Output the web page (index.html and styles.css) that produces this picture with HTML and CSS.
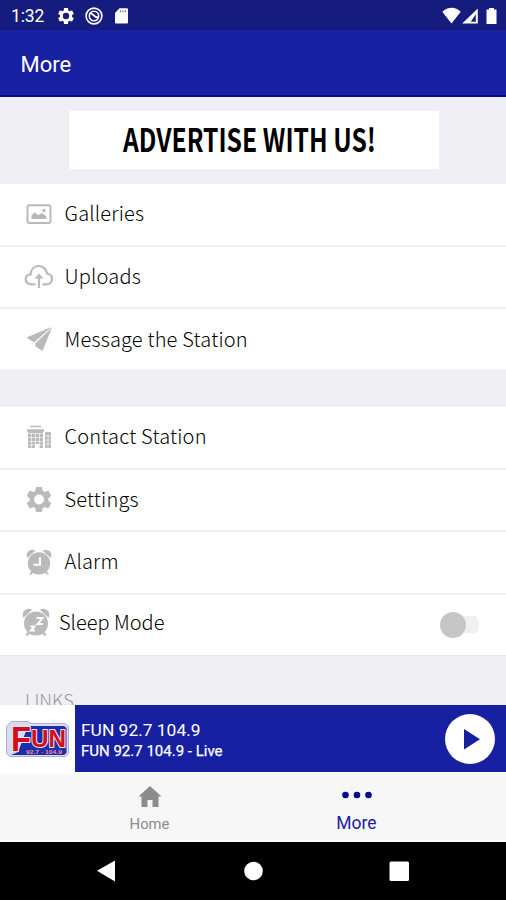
FILE: index.html
```html
<!DOCTYPE html>
<html lang="en">

<head>
    <meta charset="UTF-8">
    <meta name="viewport" content="width=device-width, initial-scale=1.0">
    <title>More</title>
    <link rel="stylesheet" href="styles.css">
</head>

<body>
    <!-- shapes used more than once -->
    <svg class="defs" width="0" height="0">
        <symbol id="gear" viewBox="2 2 20 20">
            <path d="M19.43 12.98c.04-.32.07-.64.07-.98s-.03-.66-.07-.98l2.11-1.65c.19-.15.24-.42.12-.64l-2-3.46c-.12-.22-.39-.3-.61-.22l-2.49 1c-.52-.4-1.08-.73-1.69-.98l-.38-2.65C14.46 2.18 14.25 2 14 2h-4c-.25 0-.46.18-.49.42l-.38 2.65c-.61.25-1.17.59-1.69.98l-2.49-1c-.23-.09-.49 0-.61.22l-2 3.46c-.13.22-.07.49.12.64l2.11 1.65c-.04.32-.07.65-.07.98s.03.66.07.98l-2.11 1.65c-.19.15-.24.42-.12.64l2 3.46c.12.22.39.3.61.22l2.49-1c.52.4 1.08.73 1.69.98l.38 2.65c.03.24.24.42.49.42h4c.25 0 .46-.18.49-.42l.38-2.65c.61-.25 1.17-.59 1.69-.98l2.49 1c.23.09.49 0 .61-.22l2-3.46c.12-.22.07-.49-.12-.64l-2.11-1.65zM12 16a4 4 0 1 1 0-8 4 4 0 0 1 0 8z" fill="currentColor"/>
        </symbol>
        <symbol id="clock" viewBox="0 0 28 28">
            <g fill="currentColor">
                <circle cx="14" cy="15.500" r="12"/>
                <path d="M1.500 9.800C-1.500 4 4.500-1.500 10.300 1.700z"/>
                <path d="M26.500 9.800C29.500 4 23.500-1.500 17.700 1.700z"/>
                <path d="M5.500 24l-2.300 3.400h2.500l2.300-2zM22.500 24l2.300 3.400h-2.500l-2.300-2z"/>
            </g>
        </symbol>
    </svg>

    <div class="status">
        <span class="time">1:32</span>
        <svg class="status-gear" width="16" height="16"><use href="#gear"/></svg>
        <svg class="status-circle" width="18" height="18" viewBox="0 0 18 18" fill="none" stroke="#fff">
            <circle cx="9" cy="9" r="7.900" stroke-width="1.600"/>
            <circle cx="9" cy="9" r="4.700" stroke-width="1.600"/>
            <path d="M5 6.500c3-1 3 3.500 8 4" stroke-width="2"/>
        </svg>
        <svg class="status-card" width="13" height="16" viewBox="0 0 13 16">
            <path d="M4.500.3H12a1 1 0 0 1 1 1v13.200a1 1 0 0 1-1 1H1a1 1 0 0 1-1-1V5z" fill="#fff"/>
            <path d="M5.500 2.200v2M8 2.200v2M10.500 2.200v2" stroke="#6d72b2" stroke-width="1.200"/>
        </svg>
        <svg class="status-right" width="56" height="18" viewBox="0 0 56 18">
            <path d="M.3 4.800C5.500-.5 13.500-.5 18.700 4.800L9.500 16.500z" fill="#fff"/>
            <path d="M35.800 1.500v15H20.200zM33.800 7.300L28.800 14.700h5z" fill="#fff" fill-rule="evenodd"/>
            <path d="M47 1h5v1.500h2.500V17h-10V2.500H47z" fill="#fff"/>
        </svg>
    </div>

    <header class="header">More</header>

    <main class="content">
        <div class="ad">
            <svg class="banner" width="370" height="58" viewBox="0 0 370 58">
                <text x="54" y="41" textLength="253" lengthAdjust="spacingAndGlyphs">ADVERTISE WITH US!</text>
            </svg>
        </div>

        <ul class="menu">
            <li class="item">
                <svg class="icon" width="30" height="30" viewBox="0 0 30 30">
                    <rect x="3.500" y="6.200" width="23" height="17.800" rx="2" fill="none" stroke="currentColor" stroke-width="2"/>
                    <path d="M7.500 20v-3.800l3-3 3.500 2.700 4-1.900 4.500 3.500V20z" fill="currentColor"/>
                    <circle cx="20" cy="11.500" r="1.700" fill="currentColor"/>
                </svg>
                <span class="label">Galleries</span>
            </li>
            <li class="item">
                <svg class="icon" width="30" height="30" viewBox="0 0 30 30" fill="none" stroke="currentColor" stroke-width="2.200">
                    <path d="M11.500 23.300H7.200C-.3 22.500.2 13.500 6.700 13.300 7 2.500 21.500 2.300 23 12.500c6.500.7 6.700 10 .2 10.800h-4.700"/>
                    <path d="M15 27V15.500"/>
                    <path d="M15 12.500l4.300 5h-8.600z" fill="currentColor" stroke="none"/>
                </svg>
                <span class="label">Uploads</span>
            </li>
            <li class="item">
                <svg class="icon" width="30" height="30" viewBox="0 0 30 30" fill="currentColor">
                    <path d="M27.500 3L2.500 13.500l7.500 5z"/>
                    <path d="M28 3.500L11.500 19.300l-.3 3 7.300 4.700z"/>
                </svg>
                <span class="label">Message the Station</span>
            </li>
        </ul>

        <ul class="menu second">
            <li class="item">
                <svg class="icon" width="30" height="30" viewBox="0 0 30 30">
                    <path d="M6 4.500h11" stroke="currentColor" stroke-width="1.500"/>
                    <path d="M3 7.200h17v2.500h-1V26h-4v-4h-4v4H4V9.700H3zM21 11l1-1h4l1 1v15h-6z" fill="currentColor"/>
                    <path d="M4 11.500h15M4 15.500h15M4 19.500h15M4 23h15M7.500 11v15M11.500 11v11M15.500 11v15M21 14h6M21 18h6M21 22h6M24 12v14" stroke="#fff" stroke-opacity=".75" stroke-width=".8"/>
                </svg>
                <span class="label">Contact Station</span>
            </li>
            <li class="item">
                <svg class="icon" width="25" height="25"><use href="#gear"/></svg>
                <span class="label">Settings</span>
            </li>
            <li class="item">
                <svg class="icon" width="26" height="26" viewBox="0 0 28 28">
                    <use href="#clock"/>
                    <path d="M15 9v8H8" fill="none" stroke="#fff" stroke-width="2.300"/>
                </svg>
                <span class="label">Alarm</span>
            </li>
            <li class="item sleep">
                <svg class="icon" width="28" height="28" viewBox="0 0 28 28">
                    <use href="#clock"/>
                    <path d="M14.500 10h6l-5 6h5.500M8.500 18.500h4l-3.500 4h4" fill="none" stroke="#fff" stroke-width="1.900"/>
                </svg>
                <span class="label">Sleep Mode</span>
                <span class="toggle"><span class="knob"></span></span>
            </li>
        </ul>

        <h2 class="links">LINKS</h2>
    </main>

    <div class="player">
        <div class="cover">
            <svg width="75" height="67" viewBox="0 0 75 67">
                <path d="M12 16.500h16l3 2h34l3.500 3v27l-3 3H10l-3.500-3V21z" fill="#d9dbf0" stroke="#a9aed8"/>
                <path d="M28 21h36l2.500 2v25l-2.500 2H11l7-3z" fill="#1c2ea8"/>
                <g class="logo">
                    <text x="11" y="46" font-size="35" textLength="20" lengthAdjust="spacingAndGlyphs">F</text>
                    <text x="31" y="42" font-size="23" textLength="35" lengthAdjust="spacingAndGlyphs">UN</text>
                </g>
                <text class="freq" x="26" y="49" textLength="36" lengthAdjust="spacingAndGlyphs">92.7 · 104.9</text>
            </svg>
        </div>
        <div class="track">
            <span class="title">FUN 92.7 104.9</span>
            <span class="subtitle">FUN 92.7 104.9 - Live</span>
        </div>
        <svg class="play" width="50" height="50" viewBox="0 0 50 50">
            <circle cx="25" cy="25" r="25" fill="#fff"/>
            <path d="M19 15l16 10.300L19 35.500z" fill="#1820a2"/>
        </svg>
    </div>

    <nav class="tabs">
        <a class="tab">
            <svg width="24" height="22" viewBox="0 0 24 22"><path d="M12 0l11.500 10.500h-3V21h-6v-7h-5v7h-6V10.500h-3z" fill="#8c8c8c"/></svg>
            <span>Home</span>
        </a>
        <a class="tab active">
            <svg width="30" height="22" viewBox="0 0 30 22" fill="#08088f"><circle cx="3.500" cy="9" r="3.300"/><circle cx="15" cy="9" r="3.300"/><circle cx="26.500" cy="9" r="3.300"/></svg>
            <span>More</span>
        </a>
    </nav>

    <div class="system">
        <svg width="506" height="58" viewBox="0 0 506 58" fill="#fff">
            <path d="M97 28.800L115 18.500v21z"/>
            <circle cx="253.500" cy="29" r="9.300"/>
            <rect x="389.500" y="19.500" width="19.500" height="19.500" rx="1.500"/>
        </svg>
    </div>
</body>

</html>
```
FILE: styles.css
```css
body {
    margin: 0;
    width: 506px;
    height: 900px;
    overflow: hidden;
    display: flex;
    flex-direction: column;
    background: #efeff4;
    font-family: Roboto, "Liberation Sans", sans-serif;
}

.defs {
    display: none;
}

.status {
    box-sizing: border-box;
    height: 30px;
    padding: 1px 8px 0 11px;
    display: flex;
    align-items: center;
    flex-shrink: 0;
    background: #151c7e;
    color: #fff;
}

.time {
    width: 47px;
    font-size: 17.5px;
    letter-spacing: -.1px;
}

.status-circle {
    margin-left: 11px;
}

.status-card {
    margin-left: 12px;
}

.status-right {
    margin-left: auto;
}

.header {
    box-sizing: border-box;
    height: 67px;
    padding: 1px 20.5px 0;
    flex-shrink: 0;
    border-bottom: 2px solid #08088f;
    background: #1820a2;
    color: #fff;
    font-size: 22px;
    line-height: 68px;
}

.content {
    height: 608px;
    overflow: hidden;
    flex-shrink: 0;
}

.ad {
    box-sizing: border-box;
    height: 87px;
    padding: 14px 0 0 68.5px;
}

.banner {
    display: block;
    background: #fff;
    font-family: "Noto Sans CJK SC", sans-serif;
    font-size: 32px;
    font-weight: 700;
}

.menu {
    margin: 0;
    padding: 0;
    list-style: none;
    background: #fff;
    border-bottom: 1px solid #e8e8ec;
}

.second {
    margin-top: 36px;
}

.item {
    box-sizing: border-box;
    height: 62.5px;
    padding: 0 27px 1px 24px;
    display: flex;
    align-items: center;
    border-bottom: 2px solid #efeff1;
}

.item:last-child {
    height: 61px;
    border-bottom: none;
}

.icon {
    width: 30px;
    flex-shrink: 0;
    color: #bababa;
}

.label {
    margin: -1px 0 0 10.5px;
    font-family: "Noto Sans CJK SC", sans-serif;
    font-size: 20px;
    font-weight: 300;
    line-height: 30px;
    letter-spacing: .2px;
    color: #000;
    white-space: nowrap;
}

.second .item:last-child {
    height: 60.5px;
}

.sleep {
    padding-left: 22px;
    padding-bottom: 5px;
}

.sleep .icon {
    width: 28px;
}

.sleep .label {
    margin-left: 9px;
    letter-spacing: 0;
}

.toggle {
    width: 39px;
    height: 26px;
    margin: 5px 0 0 auto;
    display: flex;
    align-items: center;
    background: linear-gradient(#f0f0f0, #f0f0f0) right center / 26px 17px no-repeat;
    border-radius: 13px;
}

.knob {
    width: 26px;
    height: 26px;
    border-radius: 50%;
    background: #c6c6c6;
}

.links {
    margin: 30px 0 0 25px;
    font-family: "Noto Sans CJK SC", sans-serif;
    font-size: 18px;
    font-weight: 300;
    line-height: 26px;
    color: #99999c;
}

.player {
    height: 67px;
    display: flex;
    align-items: center;
    flex-shrink: 0;
    background: #1820a2;
    color: #fff;
}

.cover {
    width: 75px;
    height: 67px;
    background: #fff;
}

.logo {
    font-family: "Liberation Sans", sans-serif;
    font-weight: 700;
    fill: #d10d20;
    stroke: #f3dfe8;
    stroke-width: 2px;
    stroke-linejoin: round;
    paint-order: stroke;
}

.freq {
    font-family: "Liberation Sans", sans-serif;
    font-size: 6px;
    font-weight: 700;
    fill: #f28d98;
}

.track {
    margin: 4px 0 0 6px;
    display: flex;
    flex-direction: column;
}

.title {
    font-size: 17.4px;
    line-height: 22px;
}

.subtitle {
    font-size: 15px;
    line-height: 21px;
    -webkit-text-stroke: .25px #fff;
}

.play {
    margin: 0 11px 0 auto;
}

.tabs {
    box-sizing: border-box;
    height: 70px;
    padding: 0 46px;
    display: flex;
    flex-shrink: 0;
    border-top: 2px solid #fff;
    border-bottom: 2px solid #fff;
    background: #f7f7f8;
}

.tab {
    flex: 1;
    padding-top: 12px;
    display: flex;
    flex-direction: column;
    align-items: center;
    color: #8c8c8c;
    font-size: 14.8px;
}

.tab span {
    margin-top: 6px;
    line-height: 20px;
}

.active {
    color: #2020a0;
    font-size: 17.5px;
}

.active span {
    margin-top: 5px;
}

.system {
    height: 58px;
    flex-shrink: 0;
    background: #000;
}
```
